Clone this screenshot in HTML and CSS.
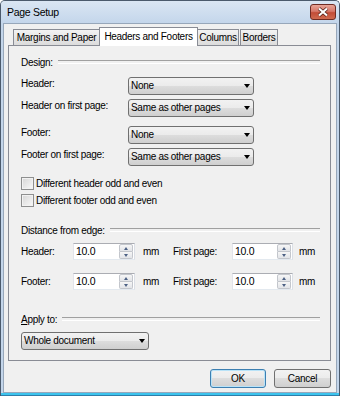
FILE: index.html
```html
<!DOCTYPE html>
<html lang="en">
<head>
    <meta charset="UTF-8">
    <title>Page Setup</title>
    <link rel="stylesheet" href="styles.css">
</head>
<body>

    <div class="window">
        <div class="titlebar">
            <span class="title">Page Setup</span>
            <span class="close">
                <svg width="24" height="14" viewBox="0 0 24 14">
                    <path d="M8 3.5 L16 10.5 M16 3.5 L8 10.5" stroke="#4a1a12" stroke-width="3.6" fill="none"/>
                    <path d="M8 3.5 L16 10.5 M16 3.5 L8 10.5" stroke="#fff" stroke-width="2.2" fill="none"/>
                </svg>
            </span>
        </div>

        <div class="client">
            <!-- Tabs -->
            <div class="tabs">
                <div class="tab tab-margins">Margins and Paper</div>
                <div class="tab tab-headers active">Headers and Footers</div>
                <div class="tab tab-columns">Columns</div>
                <div class="tab tab-borders">Borders</div>
            </div>

            <div class="panel">
                <div class="group-title design-title">Design:</div>

                <div class="row row-header">
                    <span class="label">Header:</span>
                    <div class="combo"><span>None</span><i class="arrow"></i></div>
                </div>
                <div class="row row-gap">
                    <span class="label">Header on first page:</span>
                    <div class="combo"><span>Same as other pages</span><i class="arrow"></i></div>
                </div>
                <div class="row row-footer">
                    <span class="label">Footer:</span>
                    <div class="combo"><span>None</span><i class="arrow"></i></div>
                </div>
                <div class="row row-gap">
                    <span class="label">Footer on first page:</span>
                    <div class="combo"><span>Same as other pages</span><i class="arrow"></i></div>
                </div>

                <div class="checkrow check-first"><span class="check"></span>Different header odd and even</div>
                <div class="checkrow check-second"><span class="check"></span>Different footer odd and even</div>

                <div class="group-title distance-title">Distance from edge:</div>

                <div class="spinrow spinrow-first">
                    <span class="spin-label">Header:</span>
                    <div class="spin"><span class="spin-val">10.0</span><span class="spin-btns"><b class="up"></b><b class="down"></b></span></div>
                    <span class="unit">mm</span>
                    <span class="spin-label2">First page:</span>
                    <div class="spin spin-right"><span class="spin-val">10.0</span><span class="spin-btns"><b class="up"></b><b class="down"></b></span></div>
                    <span class="unit2">mm</span>
                </div>
                <div class="spinrow spinrow-second">
                    <span class="spin-label">Footer:</span>
                    <div class="spin"><span class="spin-val">10.0</span><span class="spin-btns"><b class="up"></b><b class="down"></b></span></div>
                    <span class="unit">mm</span>
                    <span class="spin-label2">First page:</span>
                    <div class="spin spin-right"><span class="spin-val">10.0</span><span class="spin-btns"><b class="up"></b><b class="down"></b></span></div>
                    <span class="unit2">mm</span>
                </div>

                <div class="group-title apply-title"><span><u>A</u>pply to:</span></div>
                <div class="combo combo-apply"><span>Whole document</span><i class="arrow"></i></div>
            </div>

            <div class="buttons">
                <div class="btn btn-default">OK</div>
                <div class="btn btn-cancel">Cancel</div>
            </div>
        </div>
    </div>

</body>
</html>
```

FILE: styles.css
```css
* {
    margin: 0;
    padding: 0;
    box-sizing: border-box;
}

body {
    width: 340px;
    height: 396px;
    overflow: hidden;
    font-family: "Liberation Sans", Arial, sans-serif;
    font-size: 10px;
    letter-spacing: -0.3px;
    color: #000;
    background: #fff;
}

/* Window frame */
.window {
    width: 340px;
    height: 396px;
    border: 1px solid #4b5a6c;
    border-bottom: none;
    border-radius: 5px 5px 0 0;
    padding: 0 2px 3px 2px;
    background: linear-gradient(to top, #2f7ea8 0, #2f7ea8 1px, #3cc4ee 1px, #3cc4ee 3px, #c3d5ea 3px);
}

.titlebar {
    height: 22px;
    margin: 0 -2px;
    display: flex;
    align-items: flex-start;
    justify-content: space-between;
    background: linear-gradient(#dae6f3, #c4d6eb);
    border-radius: 4px 4px 0 0;
}

.title {
    padding-left: 6px;
    line-height: 23px;
    font-size: 10.5px;
}

.close {
    width: 26px;
    height: 16px;
    margin: 3px 3px 0 0;
    border: 1px solid #6f2b22;
    border-radius: 3px;
    background: linear-gradient(#e8a597, #d7786a 45%, #c24c37 55%, #d06a4f);
    display: flex;
    align-items: center;
    justify-content: center;
}

/* Client area */
.client {
    height: 370px;
    border: 1px solid #97a7ba;
    background: #f0f0f0;
    padding: 3px 5px 4px 4px;
    display: flex;
    flex-direction: column;
}

/* Tabs */
.tabs {
    height: 18px;
    display: flex;
    padding-left: 5px;
}

.tab {
    height: 16px;
    margin-top: 2px;
    border: 1px solid #898c95;
    border-bottom: none;
    background: linear-gradient(#f3f3f3, #e6e6e6 50%, #dcdcdc);
    text-align: center;
    line-height: 15px;
}

.tab-margins { width: 87px; }
.tab-headers { width: 99px; margin-left: -1px; }
.tab-columns { width: 42px; margin-left: -1px; }
.tab-borders { width: 38px; margin-left: 1px; }

.tab.active {
    height: 19px;
    margin-top: 0;
    margin-bottom: -1px;
    background: #fff;
    line-height: 17px;
    position: relative;
    z-index: 1;
}

.panel {
    height: 316px;
    border: 1px solid #898c95;
    background: #f0f0f0;
    padding: 10px 10px 0 12px;
    display: flex;
    flex-direction: column;
}

/* Group headers with etched line */
.group-title {
    height: 13px;
    line-height: 13px;
    display: flex;
    white-space: nowrap;
}

.group-title::after {
    content: "";
    flex: 1;
    height: 2px;
    margin: 4px 0 0 5px;
    border-top: 1px solid #a0a0a0;
    border-bottom: 1px solid #fff;
}

.distance-title { margin-top: 17px; }
.apply-title { margin-top: 23px; }

/* Label + dropdown rows */
.row {
    display: flex;
    align-items: flex-start;
}

.row-header { margin-top: 8px; }
.row-gap { margin-top: 4px; }
.row-footer { margin-top: 9px; }

.label {
    width: 107px;
    line-height: 13px;
}

.combo {
    width: 126px;
    height: 18px;
    border: 1px solid #707070;
    border-radius: 3px;
    background: linear-gradient(#f2f2f2, #ebebeb 50%, #dddddd 50%, #cfcfcf);
    display: flex;
    align-items: center;
    justify-content: space-between;
    padding: 0 3px 0 2px;
    line-height: 16px;
}

.arrow {
    width: 0;
    height: 0;
    border-left: 3.5px solid transparent;
    border-right: 3.5px solid transparent;
    border-top: 4px solid #000;
}

.combo-apply {
    width: 128px;
    margin-top: 6px;
}

/* Checkboxes */
.checkrow {
    height: 13px;
    display: flex;
    align-items: center;
    gap: 2px;
}

.check-first { margin-top: 11px; }
.check-second { margin-top: 4px; }

.check {
    width: 13px;
    height: 13px;
    border: 1px solid #8e8f8f;
    background: linear-gradient(135deg, #d6d6d6, #f9f9f9);
    box-shadow: inset 0 0 0 1px #f2f2f2;
}

/* Spin boxes */
.spinrow {
    height: 17px;
    display: flex;
    align-items: center;
}

.spinrow-first { margin-top: 6px; }
.spinrow-second { margin-top: 13px; }

.spin-label { width: 52px; }
.spin-label2 { width: 59px; }

.spin {
    width: 62px;
    height: 17px;
    border: 1px solid #abadb3;
    border-color: #abadb3 #dbdfe6 #e3e9ef #e2e3ea;
    background: #fff;
    display: flex;
}

.spin-right { width: 61px; }

.spin-val {
    flex: 1;
    padding-left: 2px;
    line-height: 15px;
    font-size: 10.5px;
}

.spin-btns {
    width: 14px;
    margin-right: 1px;
    display: flex;
    flex-direction: column;
}

.spin-btns b {
    flex: 1;
    border: 1px solid #c3c6cc;
    background: linear-gradient(#f6f6f6, #e2e4e8);
    display: flex;
    align-items: center;
    justify-content: center;
}

.spin-btns b.up { border-radius: 2px 2px 0 0; }
.spin-btns b.down { border-radius: 0 0 2px 2px; border-top: none; }

.spin-btns b::before {
    content: "";
    width: 0;
    height: 0;
    border-left: 2.5px solid transparent;
    border-right: 2.5px solid transparent;
}

.spin-btns b.up::before { border-bottom: 3px solid #4d6185; }
.spin-btns b.down::before { border-top: 3px solid #4d6185; }

.unit {
    width: 38px;
    padding-left: 8px;
}

.unit2 { padding-left: 6px; }

/* Dialog buttons */
.buttons {
    display: flex;
    justify-content: flex-end;
    gap: 8px;
    margin-top: 8px;
}

.btn {
    width: 56px;
    height: 19px;
    border: 1px solid #707070;
    border-radius: 3px;
    background: linear-gradient(#f2f2f2, #ebebeb 50%, #dddddd 50%, #cfcfcf);
    text-align: center;
    line-height: 17px;
}

.btn-default {
    border-color: #3c7fb1;
    box-shadow: inset 0 0 0 1px #b9e3f8;
}

.btn-cancel { width: 57px; }
```
